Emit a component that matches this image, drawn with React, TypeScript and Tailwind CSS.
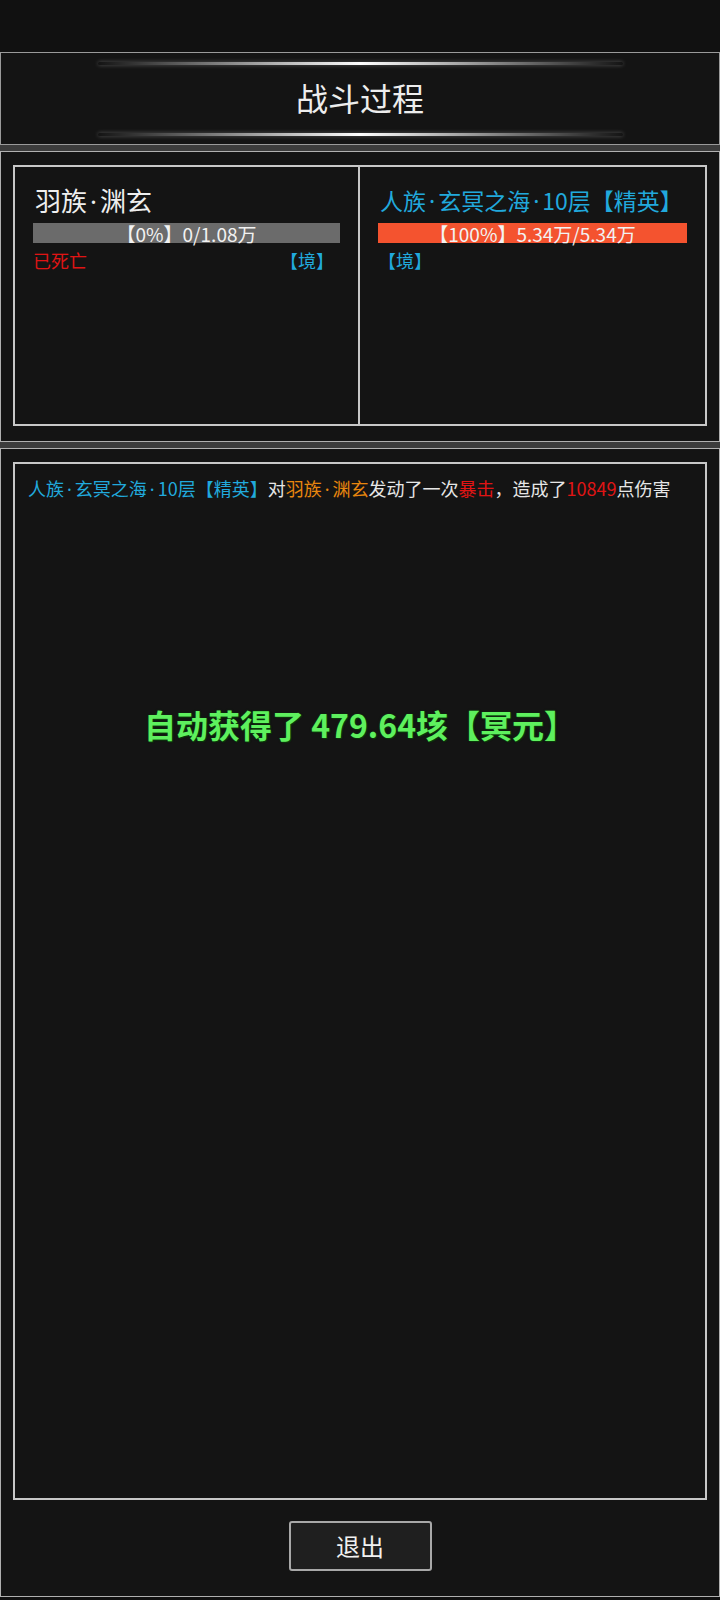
import React from "react";

const font = { fontFamily: '"Noto Sans CJK SC", "Noto Sans", sans-serif' };

const GlowLine = () => (
    <div className="mx-auto h-[3px] w-[525px] rounded-full bg-gradient-to-r from-transparent via-white to-transparent shadow-[0_0_4px_rgba(255,255,255,0.3)]" />
);

type HpBarProps = {
    text: string
    percent: number
    color: string
}

const HpBar: React.FC<HpBarProps> = ({ text, percent, color }) => {
    return (
        <div className="relative h-[20px] w-full bg-[#6b6b6b]">
            <div className={`h-full ${color}`} style={{ width: `${percent}%` }} />
            <span className="absolute inset-0 flex items-center justify-center text-[19px] leading-none text-[#f2f2f2]">{text}</span>
        </div>
    )
}

// 窄的间隔点
const Dot = () => <span className="px-[3px] font-['Noto_Sans',sans-serif]">·</span>;

const Separator = () => (
    <div className="h-[6px] bg-[#3c3c3c]" />
);

const App = () => {
    return (
        <div className="w-[720px] min-h-[1600px] bg-[#111111] text-[#e6e6e6]" style={font}>
            <div className="h-[52px] bg-[#111111]" />

            {/* 标题 */}
            <div className="h-[93px] border border-[#9a9a9a] bg-[#141414] pt-[9px] flex flex-col">
                <GlowLine />
                <h1 className="flex-1 flex items-center justify-center text-[32px] leading-none text-[#ededed] pb-[4px]">战斗过程</h1>
                <div className="pb-[8px]">
                    <GlowLine />
                </div>
            </div>
            <Separator />

            {/* 双方信息 */}
            <div className="h-[291px] border border-[#b0b0b0] bg-[#141414] px-[12px] pt-[13px]">
                <div className="grid grid-cols-2 h-[261px] border-2 border-[#c8c8c8]">
                    <div className="flex flex-col border-r-2 border-[#c8c8c8] px-[18px] pt-[17px]">
                        <span className="text-[26px] leading-[32px] text-[#eeeeee] pl-[2px]">羽族<Dot />渊玄</span>
                        <div className="mt-[6px]">
                            <HpBar text="【0%】0/1.08万" percent={0} color="bg-[#f4532f]" />
                        </div>
                        <div className="mt-[5px] flex items-center justify-between text-[18px] leading-[24px]">
                            <span className="text-[#e01414]">已死亡</span>
                            <span className="text-[#21a9dc] pr-[6px]">【境】</span>
                        </div>
                    </div>
                    <div className="flex flex-col px-[18px] pt-[17px]">
                        <span className="text-[23px] leading-[32px] text-[#21a9dc] whitespace-nowrap pl-[2px]">人族<Dot />玄冥之海<Dot />10层【精英】</span>
                        <div className="mt-[6px]">
                            <HpBar text="【100%】5.34万/5.34万" percent={100} color="bg-[#f4532f]" />
                        </div>
                        <div className="mt-[5px] flex items-center text-[18px] leading-[24px]">
                            <span className="text-[#21a9dc]">【境】</span>
                        </div>
                    </div>
                </div>
            </div>
            <Separator />

            {/* 战斗记录 */}
            <div className="h-[1149px] border border-[#b0b0b0] bg-[#141414] px-[12px] pt-[13px] flex flex-col">
                <div className="relative h-[1038px] border-2 border-[#c8c8c8] px-[13px] pt-[11px]">
                    <p className="text-[18px] leading-[26px] whitespace-nowrap text-[#e6e6e6]">
                        <span className="text-[#21a9dc]">人族<Dot />玄冥之海<Dot />10层【精英】</span>
                        对
                        <span className="text-[#e8860e]">羽族<Dot />渊玄</span>
                        发动了一次
                        <span className="text-[#e01414]">暴击</span>
                        ，造成了
                        <span className="text-[#e01414]">10849</span>
                        点伤害
                    </p>
                    <div className="absolute left-0 right-0 top-[238px] flex justify-center">
                        <span className="text-[32px] font-bold leading-[44px] text-[#5ef05e] [text-shadow:0_0_2px_#0b3b0b,1px_1px_1px_#0b3b0b]">自动获得了 479.64垓【冥元】</span>
                    </div>
                </div>
                <div className="flex justify-center pt-[21px]">
                    <button className="w-[143px] h-[50px] rounded-[3px] border-2 border-[#a8a8a8] bg-[#1f1f1f] text-[24px] leading-none text-[#f0f0f0]">退出</button>
                </div>
            </div>
        </div>
    );
};

export default App;
